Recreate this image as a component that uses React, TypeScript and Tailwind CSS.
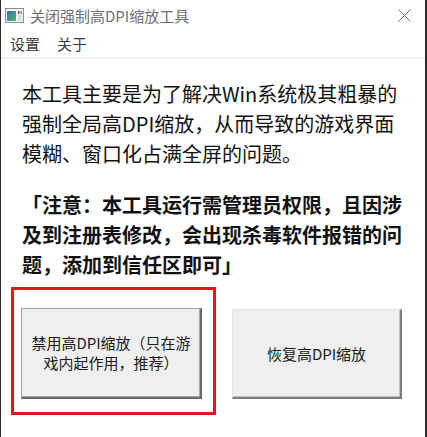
import React from 'react';

// Small window icon in the title bar
function WinIcon() {
  return (
    <svg width="19" height="15" viewBox="0 0 19 15">
      <defs>
        <linearGradient id="pane" x1="0" y1="0" x2="1" y2="1">
          <stop offset="0" stopColor="#2a6fb0" />
          <stop offset="1" stopColor="#5bb46a" />
        </linearGradient>
      </defs>
      <rect x="0.5" y="0.5" width="18" height="14" fill="#f4f4f4" stroke="#8c8c8c" />
      <rect x="2" y="3" width="9" height="10" fill="url(#pane)" />
      <rect x="13" y="3" width="1.5" height="3" fill="#5a5a5a" />
      <rect x="15.5" y="3" width="1.5" height="3" fill="#8a8a8a" />
      <rect x="13" y="7" width="4" height="6" fill="#dcdcdc" />
    </svg>
  );
}

function CloseIcon() {
  return (
    <svg width="13" height="13" viewBox="0 0 13 13">
      <path d="M0.5 0.5 L12.5 12.5 M12.5 0.5 L0.5 12.5" stroke="#6e6e6e" strokeWidth="1" fill="none" />
    </svg>
  );
}

export default function App() {
  return (
    <div
      className="w-[427px] h-[437px] bg-[#2b2b2b] flex overflow-hidden"
      style={{ fontFamily: '"Noto Sans CJK SC", "Noto Sans", sans-serif' }}
    >
      <div className="ml-px mr-[2px] flex-1 bg-white flex flex-col">
        {/* Title bar */}
        <div className="h-[30px] flex items-center pl-[4px] pr-[14px]">
          <WinIcon />
          <span className="ml-[6px] text-[15px] leading-none text-[#707070]">关闭强制高DPI缩放工具</span>
          <div className="ml-auto flex items-center">
            <CloseIcon />
          </div>
        </div>

        {/* Menu bar */}
        <div className="h-[27px] flex items-center pl-[9px] gap-[17px] text-[15px] leading-none text-[#3c3c3c]">
          <span>设置</span>
          <span>关于</span>
        </div>
        <div className="h-[2px] bg-[#f0f0f0]" />

        {/* Content */}
        <div className="pl-[21px] text-[20px] leading-[30px] text-[#111] whitespace-nowrap">
          <p className="mt-[20px]">
            本工具主要是为了解决Win系统极其粗暴的<br />
            强制全局高DPI缩放，从而导致的游戏界面<br />
            模糊、窗口化占满全屏的问题。
          </p>
          <p className="mt-[21px] font-bold">
            「注意：本工具运行需管理员权限，且因涉<br />
            及到注册表修改，会出现杀毒软件报错的问<br />
            题，添加到信任区即可」
          </p>
        </div>

        {/* Buttons */}
        <div className="flex items-start pl-[10px] mt-[7px]">
          <div className="w-[205px] h-[128px] border-[3px] border-[#e8141c] pl-[7px] pt-[18px]">
            <button className="w-[181px] h-[91px] bg-[#efefef] border-t border-l border-[#a0a0a0] border-r-2 border-b-2 border-r-[#686868] border-b-[#686868] shadow-[inset_-1px_-1px_0_#a8a8a8] flex flex-col items-center justify-center text-[15px] leading-[20px] text-[#1a1a1a]">
              <span>禁用高DPI缩放（只在游</span>
              <span>戏内起作用，推荐）</span>
            </button>
          </div>
          <button className="ml-[16px] mt-[22px] w-[170px] h-[90px] bg-[#efefef] border-t border-l border-[#e2e2e2] border-r-2 border-b-2 border-r-[#7c7c7c] border-b-[#7c7c7c] shadow-[inset_-1px_-1px_0_#c4c4c4] flex items-center justify-center text-[15px] leading-[20px] text-[#1a1a1a]">
            恢复高DPI缩放
          </button>
        </div>
      </div>
    </div>
  );
}
